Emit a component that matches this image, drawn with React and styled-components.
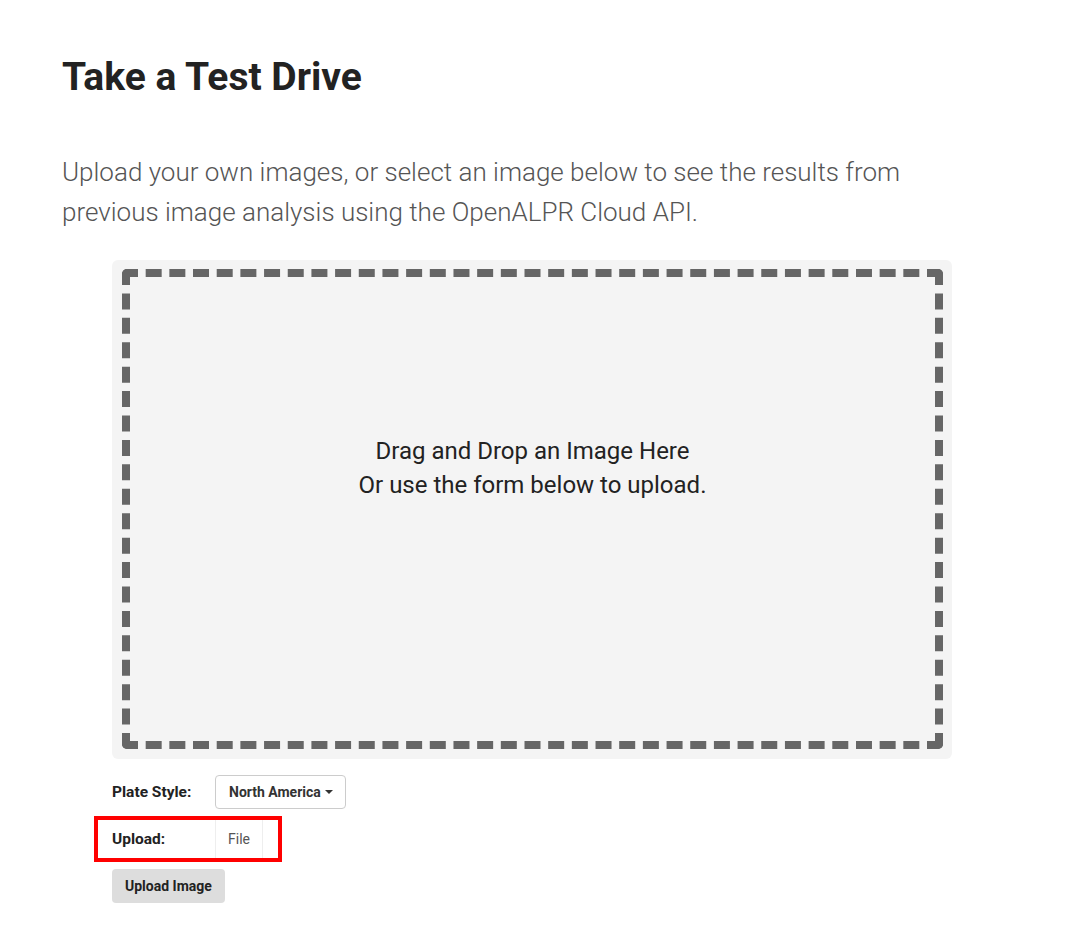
import React from 'react';
import styled, { createGlobalStyle } from 'styled-components';

const GlobalStyle = createGlobalStyle`
  body {
    margin: 0;
    background: #fff;
    font-family: Roboto, 'Liberation Sans', sans-serif;
    color: #222;
  }
`;

const Page = styled.main`
  padding: 53px 62px 30px;
`;

const Title = styled.h1`
  margin: 0;
  font-size: 39px;
  line-height: 48px;
  font-weight: 700;
  color: #222;
`;

const Lead = styled.p`
  margin: 51px 0 0;
  max-width: 900px;
  font-size: 26px;
  line-height: 40px;
  font-weight: 300;
  color: #555;
`;

const Section = styled.section`
  margin: 28px 0 0 50px;
  width: 840px;
`;

const DropArea = styled.div`
  background: #f4f4f4;
  border-radius: 6px;
  padding: 9px 9px 10px 10px;
`;

const DashedBox = styled.div`
  height: 480px;
  box-sizing: border-box;
  border: 8px dashed #666;
  border-radius: 5px;
  display: flex;
  flex-direction: column;
  align-items: center;
  justify-content: center;
  font-size: 24px;
  line-height: 34px;
  color: #222;
  padding-bottom: 82px;
`;

const Form = styled.form`
  display: flex;
  flex-direction: column;
  align-items: flex-start;
  margin-top: 16px;
`;

const Row = styled.div`
  display: flex;
  align-items: center;
  height: ${p => p.$h || 34}px;
`;

const HighlightRow = styled(Row)`
  margin: 7px 0 0 -18px;
  padding-left: 14px;
  padding-right: 15px;
  border: 4px solid #ff0000;
  height: 38px;
`;

const Label = styled.label`
  width: 103px;
  font-size: 15.5px;
  font-weight: 700;
  color: #222;
`;

const Dropdown = styled.button`
  display: flex;
  align-items: center;
  gap: 4px;
  height: 34px;
  padding: 0 12px 0 13px;
  background: #fff;
  border: 1px solid #ccc;
  border-radius: 4px;
  font-family: inherit;
  font-size: 14px;
  font-weight: 700;
  color: #333;
`;

const Caret = styled.span`
  width: 0;
  height: 0;
  border-left: 4px solid transparent;
  border-right: 4px solid transparent;
  border-top: 4px solid #333;
`;

const FileCell = styled.div`
  height: 100%;
  display: flex;
  align-items: center;
  padding: 0 12px;
  border-left: 1px solid #eee;
  border-right: 1px solid #eee;
  font-size: 14px;
  color: #555;
`;

const SubmitButton = styled.button`
  margin-top: 7px;
  height: 34px;
  padding: 0 13px;
  background: #ddd;
  border: none;
  border-radius: 4px;
  font-family: inherit;
  font-size: 14px;
  font-weight: 700;
  color: #222;
`;

export default function App() {
  return (
    <>
      <GlobalStyle />
      <Page>
        <Title>Take a Test Drive</Title>
        <Lead>
          Upload your own images, or select an image below to see the results from
          previous image analysis using the OpenALPR Cloud API.
        </Lead>
        <Section>
          <DropArea>
            <DashedBox>
              <div>Drag and Drop an Image Here</div>
              <div>Or use the form below to upload.</div>
            </DashedBox>
          </DropArea>
          <Form onSubmit={e => e.preventDefault()}>
            <Row>
              <Label>Plate Style:</Label>
              <Dropdown type="button">
                North America <Caret />
              </Dropdown>
            </Row>
            <HighlightRow>
              <Label>Upload:</Label>
              <FileCell>File</FileCell>
            </HighlightRow>
            <SubmitButton type="submit">Upload Image</SubmitButton>
          </Form>
        </Section>
      </Page>
    </>
  );
}
